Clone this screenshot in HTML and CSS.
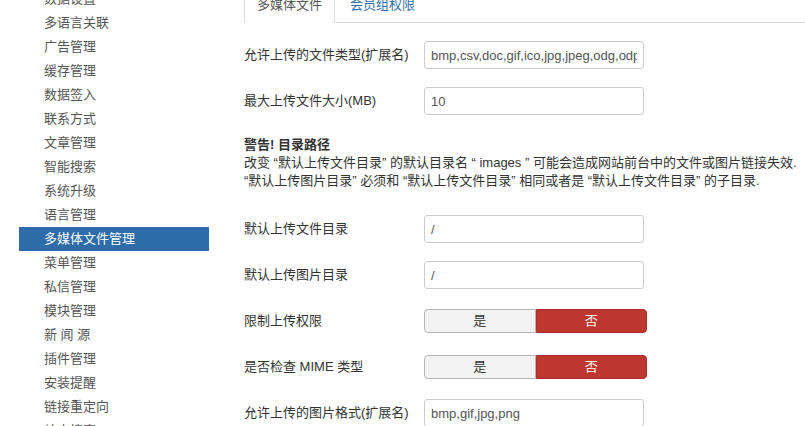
FILE: index.html
```html
<!DOCTYPE html>
<html lang="zh-CN">
<head>
<meta charset="utf-8">
<title>全局设置</title>
<link rel="stylesheet" href="styles.css">
</head>
<body>
<div class="page">
  <aside class="sidebar">
    <ul class="nav-list">
      <li><a>数据设置</a></li>
      <li><a>多语言关联</a></li>
      <li><a>广告管理</a></li>
      <li><a>缓存管理</a></li>
      <li><a>数据签入</a></li>
      <li><a>联系方式</a></li>
      <li><a>文章管理</a></li>
      <li><a>智能搜索</a></li>
      <li><a>系统升级</a></li>
      <li><a>语言管理</a></li>
      <li class="active"><a>多媒体文件管理</a></li>
      <li><a>菜单管理</a></li>
      <li><a>私信管理</a></li>
      <li><a>模块管理</a></li>
      <li><a>新 闻 源</a></li>
      <li><a>插件管理</a></li>
      <li><a>安装提醒</a></li>
      <li><a>链接重定向</a></li>
      <li><a>站内搜索</a></li>
    </ul>
  </aside>
  <main class="main">
    <ul class="tabs">
      <li class="tab active">多媒体文件</li>
      <li class="tab">会员组权限</li>
    </ul>
    <div class="tab-content">
      <div class="control-group">
        <label class="control-label">允许上传的文件类型(扩展名)</label>
        <input class="input" type="text" value="bmp,csv,doc,gif,ico,jpg,jpeg,odg,odp,ods,odt,pdf,png,ppt,swf,txt,xcf,xls">
      </div>
      <div class="control-group">
        <label class="control-label">最大上传文件大小(MB)</label>
        <input class="input" type="text" value="10">
      </div>
      <div class="alert">
        <strong>警告! 目录路径</strong><br>
        改变 “默认上传文件目录” 的默认目录名 “ images ” 可能会造成网站前台中的文件或图片链接失效.<br>
        “默认上传图片目录” 必须和 “默认上传文件目录” 相同或者是 “默认上传文件目录” 的子目录.
      </div>
      <div class="control-group">
        <label class="control-label">默认上传文件目录</label>
        <input class="input" type="text" value="/">
      </div>
      <div class="control-group">
        <label class="control-label">默认上传图片目录</label>
        <input class="input" type="text" value="/">
      </div>
      <div class="control-group">
        <label class="control-label">限制上传权限</label>
        <div class="toggle">
          <span class="btn">是</span>
          <span class="btn btn-danger">否</span>
        </div>
      </div>
      <div class="control-group">
        <label class="control-label">是否检查 MIME 类型</label>
        <div class="toggle">
          <span class="btn">是</span>
          <span class="btn btn-danger">否</span>
        </div>
      </div>
      <div class="control-group">
        <label class="control-label">允许上传的图片格式(扩展名)</label>
        <input class="input" type="text" value="bmp,gif,jpg,png">
      </div>
    </div>
  </main>
</div>
</body>
</html>
```

FILE: styles.css
```css
html, body {
  margin: 0;
  padding: 0;
  background: #fff;
  overflow: hidden;
}
body {
  font-family: "Liberation Sans", "Noto Sans CJK SC", sans-serif;
  font-size: 13px;
  line-height: 18px;
  color: #333;
}
.page {
  display: flex;
  align-items: flex-start;
}
.sidebar {
  width: 190px;
  margin-left: 19px;
  margin-top: -13px;
  flex-shrink: 0;
}
.nav-list {
  list-style: none;
  margin: 0;
  padding: 0;
}
.nav-list a {
  display: block;
  padding: 3px 0 3px 25px;
  color: #555;
  white-space: nowrap;
}
.nav-list .active a {
  background: #2d6ca8;
  color: #fff;
}
.main {
  margin-left: 35px;
  flex: 1;
  min-width: 0;
}
.tabs {
  display: flex;
  list-style: none;
  margin: -13px 0 0;
  padding: 0;
  border-bottom: 1px solid #ddd;
}
.tab {
  padding: 8px 12px;
  line-height: 18px;
  border: 1px solid transparent;
  border-radius: 4px 4px 0 0;
  margin-right: 2px;
  margin-bottom: -1px;
  color: #2f6fa8;
}
.tab.active {
  border-color: #ddd #ddd transparent;
  background: #fff;
  color: #555;
}
.tab-content {
  padding-top: 18px;
}
.control-group {
  display: flex;
  align-items: center;
  height: 28px;
  margin-bottom: 18px;
}
.control-label {
  width: 180px;
  flex-shrink: 0;
  white-space: nowrap;
}
.input {
  box-sizing: border-box;
  width: 220px;
  height: 28px;
  padding: 4px 6px;
  border: 1px solid #ccc;
  border-radius: 3px;
  font: inherit;
  color: #555;
  background: #fff;
}
.alert {
  padding: 3px 0 7px;
  margin-bottom: 18px;
  white-space: nowrap;
  color: #333;
}
.alert strong {
  font-weight: bold;
}
.toggle {
  display: flex;
  width: 223px;
  height: 24px;
}
.btn {
  flex: 1;
  box-sizing: border-box;
  display: flex;
  align-items: center;
  justify-content: center;
  background: #f3f3f3;
  border: 1px solid #b5b5b5;
  border-radius: 4px 0 0 4px;
  color: #333;
}
.btn-danger {
  background: #bd362f;
  border-color: #a8302a;
  border-radius: 0 4px 4px 0;
  color: #fff;
}
```
